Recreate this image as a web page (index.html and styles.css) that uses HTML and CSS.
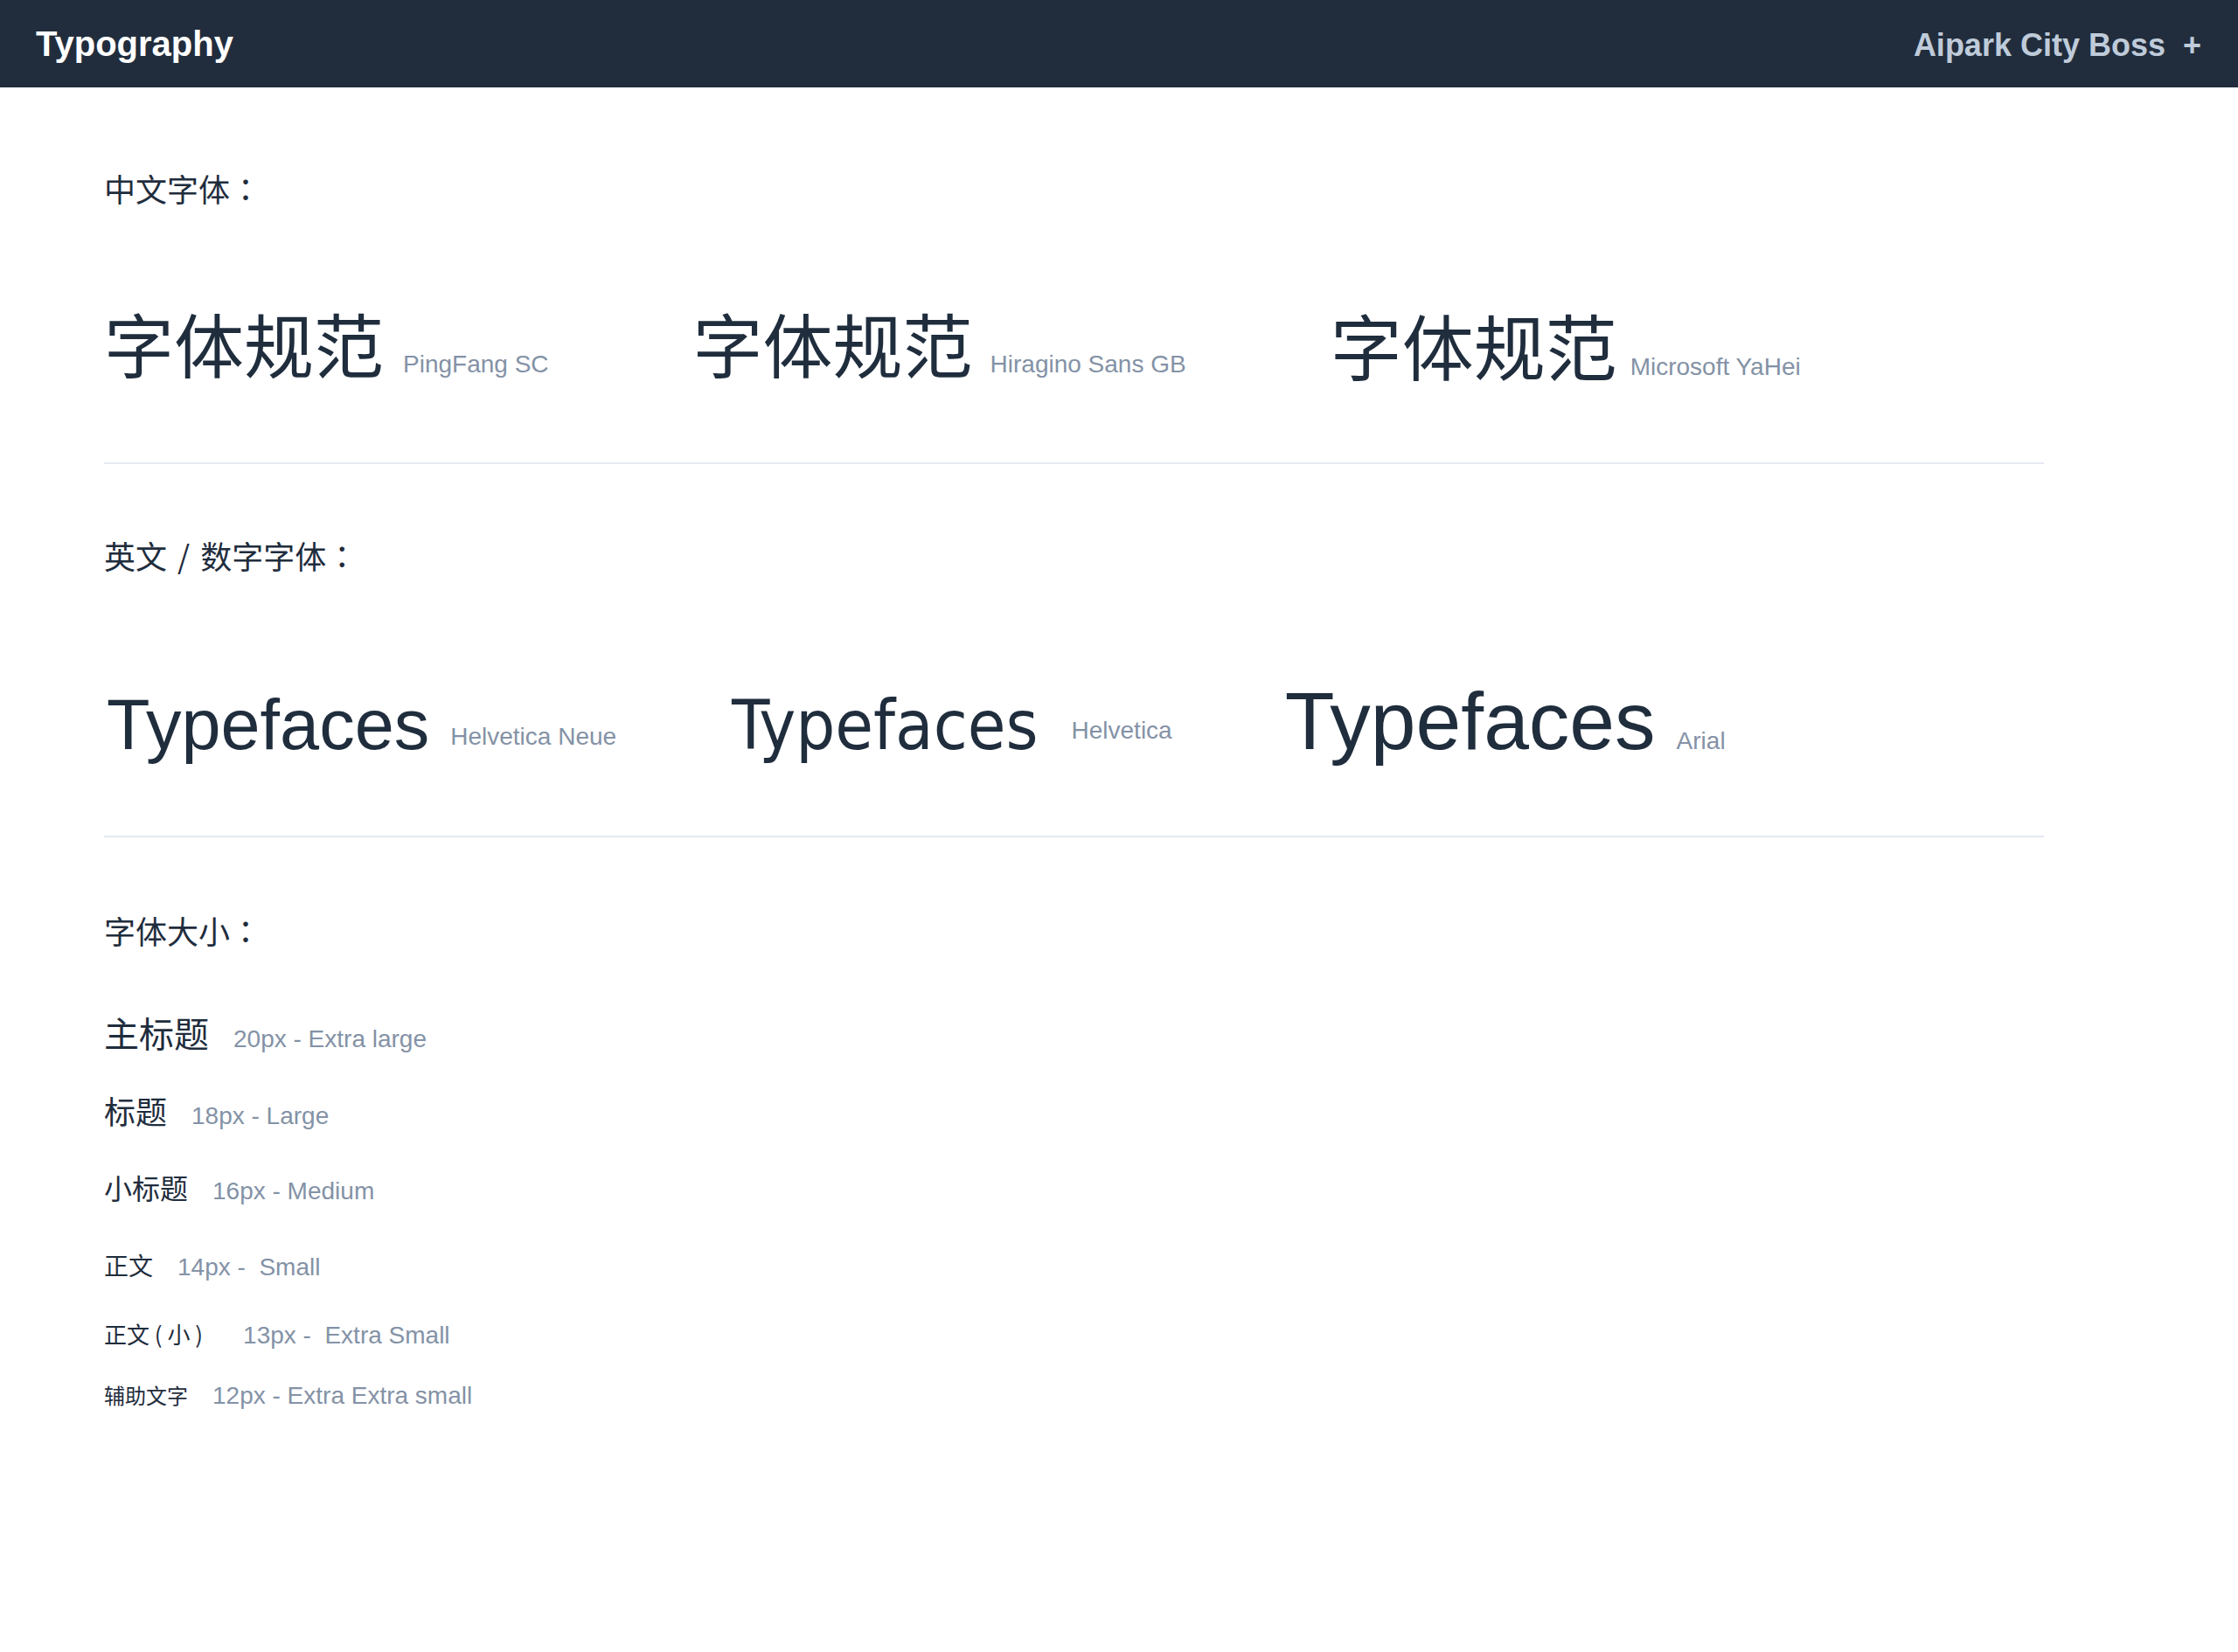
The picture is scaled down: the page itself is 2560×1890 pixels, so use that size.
FILE: index.html
```html
<!DOCTYPE html>
<html lang="zh-CN">
<head>
<meta charset="utf-8">
<title>Typography</title>
<link rel="stylesheet" href="styles.css">
</head>
<body>
<header class="topbar">
  <div class="brand">Typography</div>
  <div class="user">Aipark City Boss<span class="plus">+</span></div>
</header>
<main class="page">
  <section class="section">
    <h2 class="section-title">中文字体<span class="colon" lang="zh-TW">：</span></h2>
    <div class="sample-row cn-row">
      <div class="sample"><span class="cn-big">字体规范</span><span class="font-name n-pf">PingFang SC</span></div>
      <div class="sample"><span class="cn-big">字体规范</span><span class="font-name n-hira">Hiragino Sans GB</span></div>
      <div class="sample sample-low"><span class="cn-big cn-big-lg">字体规范</span><span class="font-name n-yahei">Microsoft YaHei</span></div>
    </div>
  </section>
  <section class="section section-en">
    <h2 class="section-title title-spaced">英文 / 数字字体<span class="colon" lang="zh-TW">：</span></h2>
    <div class="sample-row en-row">
      <div class="sample"><span class="en-big en-neue">Typefaces</span><span class="font-name n-neue">Helvetica Neue</span></div>
      <div class="sample"><span class="en-big en-helv">Typefaces</span><span class="font-name n-helv">Helvetica</span></div>
      <div class="sample"><span class="en-big en-arial">Typefaces</span><span class="font-name n-arial">Arial</span></div>
    </div>
  </section>
  <section class="section section-last">
    <h2 class="section-title">字体大小<span class="colon" lang="zh-TW">：</span></h2>
    <div class="size-list">
      <div class="size-row r-xl"><span class="cn">主标题</span><span class="font-name">20px - Extra large</span></div>
      <div class="size-row r-lg"><span class="cn">标题</span><span class="font-name">18px - Large</span></div>
      <div class="size-row r-md"><span class="cn">小标题</span><span class="font-name">16px - Medium</span></div>
      <div class="size-row r-sm"><span class="cn">正文</span><span class="font-name">14px -&nbsp; Small</span></div>
      <div class="size-row r-xs"><span class="cn">正文 ( 小 )</span><span class="font-name wide">13px -&nbsp; Extra Small</span></div>
      <div class="size-row r-xxs"><span class="cn">辅助文字</span><span class="font-name">12px - Extra Extra small</span></div>
    </div>
  </section>
</main>
</body>
</html>
```
FILE: styles.css
```css
* { box-sizing: border-box; }

body {
  margin: 0;
  background: #ffffff;
  color: #1f2d3d;
  font-family: "Liberation Sans", "Noto Sans CJK SC", sans-serif;
}

.topbar {
  height: 100px;
  background: #212d3d;
  display: flex;
  align-items: center;
  justify-content: space-between;
  padding: 0 42px 0 41px;
}

.brand {
  color: #ffffff;
  font-weight: 700;
  font-size: 40px;
}

.user {
  color: #bfcbd9;
  font-weight: 700;
  font-size: 36px;
  display: flex;
  align-items: center;
  padding-top: 4px;
}

.plus {
  margin-left: 20px;
}

.page {
  width: 2219px;
  margin-left: 119px;
  padding-top: 8px;
}

.section {
  padding-top: 83px;
  border-bottom: 2px solid #e5e9f2;
}

.section-en {
  padding-top: 80px;
}

.section-last {
  padding-top: 82px;
  border-bottom: none;
}

.section-title {
  margin: 0;
  font-family: "Noto Sans CJK SC", sans-serif;
  font-size: 36px;
  line-height: 48px;
  font-weight: 400;
  color: #1f2d3d;
}

.title-spaced {
  word-spacing: 4px;
}

.colon {
  font-family: "Noto Sans CJK TC", "Noto Sans CJK SC", sans-serif;
}

.sample-row {
  display: flex;
  align-items: baseline;
}

.sample {
  line-height: 1;
  white-space: nowrap;
}

.cn-row {
  margin-top: 112px;
  padding-bottom: 94px;
  gap: 165px;
}

.sample-low {
  align-self: flex-start;
  margin-top: 2px;
}

.cn-big {
  font-family: "Noto Sans CJK SC", sans-serif;
  font-size: 80px;
}

.cn-big-lg {
  font-size: 82px;
}

.font-name {
  font-family: "Liberation Sans", sans-serif;
  font-size: 28px;
  line-height: 1;
  color: #8492a6;
  margin-left: 20px;
}

.n-pf { margin-left: 22px; }
.n-yahei { margin-left: 15px; }

.en-row {
  margin-top: 120px;
  padding-bottom: 84px;
  gap: 129px;
}

.en-big {
  color: #1f2d3d;
}

.en-neue {
  font-family: "Liberation Sans", sans-serif;
  font-size: 81px;
  margin-left: 3px;
}

.en-helv {
  font-family: "DejaVu Sans Condensed", "DejaVu Sans", sans-serif;
  font-stretch: condensed;
  font-size: 79px;
  margin-left: 3px;
}

.en-arial {
  font-family: "Liberation Sans", sans-serif;
  font-size: 93px;
}

.n-neue { margin-left: 24px; vertical-align: 5px; }
.n-helv { margin-left: 38px; vertical-align: 12px; }
.n-arial { margin-left: 24px; }

.size-list {
  margin-top: 45px;
}

.size-row {
  display: flex;
  align-items: baseline;
}

.size-row .cn {
  font-family: "Noto Sans CJK SC", sans-serif;
  color: #1f2d3d;
}

.size-row .font-name {
  margin-left: 28px;
}

.size-row .font-name.wide {
  margin-left: 46px;
}

.r-xl { font-size: 40px; line-height: 96px; }
.r-lg { font-size: 36px; line-height: 82px; }
.r-md { font-size: 32px; line-height: 94px; }
.r-sm { font-size: 28px; line-height: 84px; }
.r-xs { font-size: 26px; line-height: 74px; }
.r-xxs { font-size: 24px; line-height: 66px; }
```
